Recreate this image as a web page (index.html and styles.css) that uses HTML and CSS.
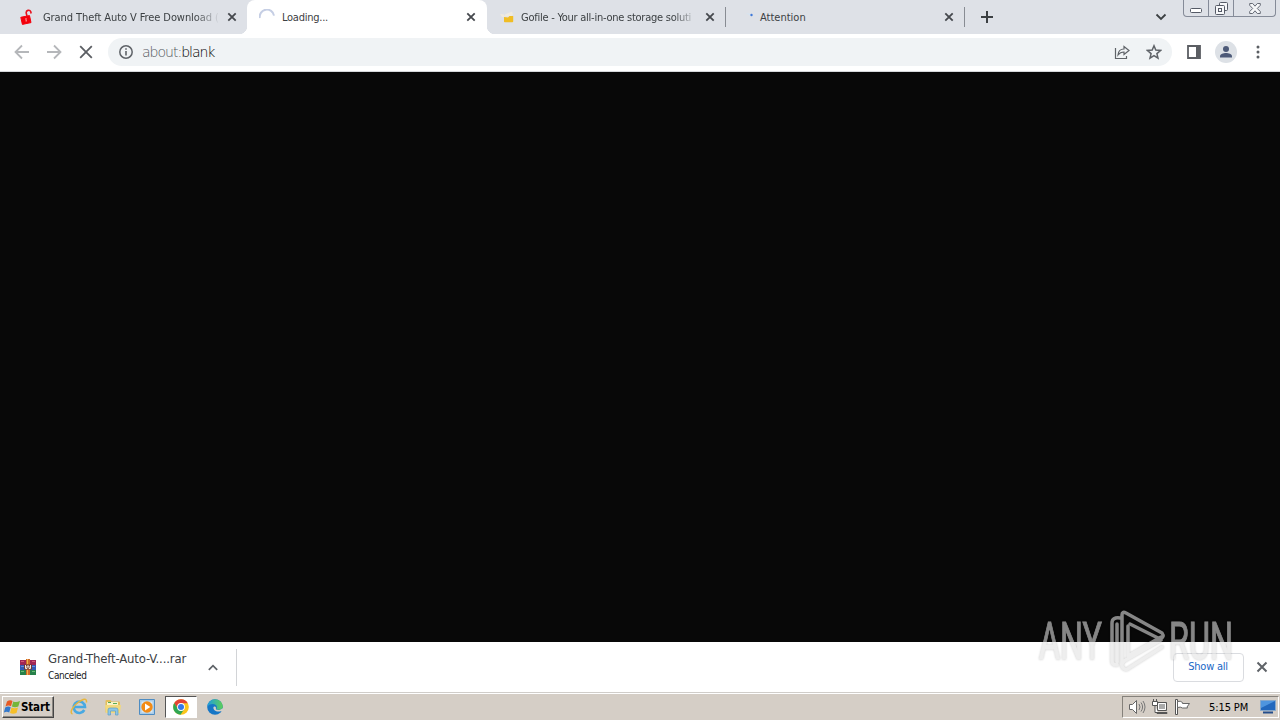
FILE: index.html
```html
<!DOCTYPE html>
<html lang="en">
<head>
  <meta charset="UTF-8">
  <meta name="viewport" content="width=device-width, initial-scale=1.0">
  <title>about:blank</title>
  <link rel="stylesheet" href="styles.css">
</head>
<body>
  <!-- Tabs -->
  <header class="tab-strip">
    <div class="tab first">
      <svg class="favicon" width="16" height="16" viewBox="0 0 16 16">
        <path d="M8 7L7.200 4a2.400 2.400 0 0 1 4.600-1.200l.3 1.700" fill="none" stroke="#e8101c" stroke-width="1.600"/>
        <path d="M1.800 8.300 10.500 6.600l1.500 7-8.600 1.800z" fill="#f3000c" stroke="#f3000c" stroke-linejoin="round"/>
        <path d="M6.200 9.500l1.500-.3-.3 1.600.6 1.500-1.400.3.100-1.600z" fill="#ffb9b9"/>
      </svg>
      <span class="tab-title fade">Grand Theft Auto V Free Download (</span>
      <svg class="tab-close" width="10" height="10" viewBox="0 0 10 10"><path d="M1.300 1.300l7.400 7.400M8.700 1.300L1.300 8.700"/></svg>
    </div>
    <div class="tab active">
      <svg class="favicon" width="16" height="16" viewBox="0 0 16 16"><path d="M.8 9A7.2 7.2 0 0 1 15 6.6" fill="none" stroke="#c5cee4" stroke-width="2"/></svg>
      <span class="tab-title">Loading...</span>
      <svg class="tab-close" width="10" height="10" viewBox="0 0 10 10"><path d="M1.300 1.300l7.400 7.400M8.700 1.300L1.300 8.700"/></svg>
    </div>
    <div class="tab">
      <svg class="favicon" width="16" height="16" viewBox="0 0 16 16">
        <path d="M1 5l4 .5 1 2.500H3zM6 5.500l7-3 1 3-2 2H6z" fill="#efeae0"/>
        <path d="M5 8l4 .5 1.500-1.500h3.700v5.400q0 .8-.8.8H5.800q-.8 0-.8-.8z" fill="#f0bd24"/>
      </svg>
      <span class="tab-title fade">Gofile - Your all-in-one storage soluti</span>
      <svg class="tab-close" width="10" height="10" viewBox="0 0 10 10"><path d="M1.300 1.300l7.400 7.400M8.700 1.300L1.300 8.700"/></svg>
    </div>
    <div class="tab last">
      <svg class="favicon" width="16" height="16" viewBox="0 0 16 16"><path d="M8 4l5 1v2z" fill="#d3e4f3"/><circle cx="13.500" cy="6" r="1.200" fill="#3f78d8"/></svg>
      <span class="tab-title">Attention</span>
      <svg class="tab-close" width="10" height="10" viewBox="0 0 10 10"><path d="M1.300 1.300l7.400 7.400M8.700 1.300L1.300 8.700"/></svg>
    </div>
    <svg class="new-tab" width="12" height="12" viewBox="0 0 12 12"><path d="M6 0v12M0 6h12" stroke="#3c4043" stroke-width="2"/></svg>
    <svg class="tab-search" width="12" height="8" viewBox="0 0 12 8"><path d="M1.500 1.500L6 6l4.500-4.500" fill="none" stroke="#3c4043" stroke-width="1.800"/></svg>
    <div class="window-buttons">
      <div class="win-btn min"><svg width="12" height="5" viewBox="0 0 12 5"><rect x=".5" y=".5" width="11" height="4" rx="1" fill="#fff" stroke="#555a66"/></svg></div>
      <div class="win-btn max"><svg width="13" height="13" viewBox="0 0 13 13" fill="#f6f7f9" stroke="#555a66"><rect x="4.500" y=".5" width="8" height="8" rx="1"/><rect x=".5" y="3.500" width="9" height="9" rx="1"/><rect x="3.500" y="6.500" width="3" height="3"/></svg></div>
      <div class="win-btn close"><svg width="12" height="11" viewBox="0 0 12 11"><path d="M.7.5h3L6 3.200 8.300.5h3v1.800L8.300 5.500l3 3v2h-3L6 7.800 3.700 10.500h-3v-2l3-3-3-3.200z" fill="#f6f7f9" stroke="#666b76"/></svg></div>
    </div>
  </header>

  <!-- Address bar -->
  <nav class="toolbar">
    <svg class="nav-icon" width="16" height="16" viewBox="0 0 16 16"><path d="M15 8H2M8 1.500L1.500 8 8 14.500" fill="none" stroke="#b5b7ba" stroke-width="1.800"/></svg>
    <svg class="nav-icon" width="16" height="16" viewBox="0 0 16 16"><path d="M1 8h13M8 1.500L14.500 8 8 14.500" fill="none" stroke="#b5b7ba" stroke-width="1.800"/></svg>
    <svg class="nav-icon" width="16" height="16" viewBox="0 0 16 16"><path d="M2.200 2.200l11.600 11.600M13.800 2.200L2.200 13.800" stroke="#5b5e63" stroke-width="1.800"/></svg>
    <div class="omnibox">
      <svg width="14" height="14" viewBox="0 0 14 14"><circle cx="7" cy="7" r="6.200" fill="none" stroke="#5f6368" stroke-width="1.500"/><path d="M7 6v4.500M7 3.300v1.500" stroke="#5f6368" stroke-width="1.600"/></svg>
      <span class="url"><span class="scheme">about:</span>blank</span>
      <svg class="share" width="16" height="16" viewBox="0 0 16 16" fill="none" stroke="#5f6368" stroke-width="1.200"><path d="M1.500 4v10.500h11V12"/><path d="M4 11c.3-4 2.500-6 6-6V2.500L15 6.500l-5 4V8C7.500 8 5.500 9 4 11z"/></svg>
      <svg width="16" height="16" viewBox="0 0 16 16"><path d="M8 1.800l1.800 4.300 4.700.4-3.600 3.100 1.100 4.600-4-2.500-4 2.500 1.100-4.600-3.600-3.100 4.700-.4z" fill="none" stroke="#5f6368" stroke-width="1.500"/></svg>
    </div>
    <svg class="side-panel" width="14" height="14" viewBox="0 0 14 14"><path d="M1 1h12v12H1z" fill="none" stroke="#5b5e63" stroke-width="1.800"/><path d="M9 1h4v12H9z" fill="#5b5e63"/></svg>
    <svg class="avatar" width="22" height="22" viewBox="0 0 22 22"><circle cx="11" cy="11" r="11" fill="#dde1e6"/><circle cx="11" cy="8" r="3" fill="#4d5a78"/><path d="M5 16.500v-1.300c0-2 3.500-3.200 6-3.200s6 1.200 6 3.200v1.300z" fill="#4d5a78"/></svg>
    <svg class="menu" width="4" height="14" viewBox="0 0 4 14" fill="#5b5e63"><circle cx="2" cy="2" r="1.500"/><circle cx="2" cy="7" r="1.500"/><circle cx="2" cy="12" r="1.500"/></svg>
  </nav>

  <main class="page"></main>

  <!-- Downloads -->
  <section class="downloads">
    <svg width="16" height="16" viewBox="0 0 16 16">
      <path d="M0 1h16v5H0z" fill="#a02656"/><path d="M0 6h16v5H0z" fill="#3459b4"/><path d="M0 11h16v5H0z" fill="#27804a"/>
      <path d="M1 2.500h3M12 2.500h3" stroke="#d45878"/><path d="M1 7.500h3M12 7.500h3" stroke="#678be0"/><path d="M1 12.500h3M12 12.500h3" stroke="#68ba74"/>
      <path d="M6 0h4v16H6z" fill="#d06a2b"/><path d="M4 5.500h8v5H4z" fill="#6c3932"/><path d="M5.500 6v3.500h1.500V7h2v2.500h1.500V6" fill="none" stroke="#f6e9df"/><path d="M7.500 0v5M7.500 11v5" stroke="#f0b34f"/>
    </svg>
    <div class="file">
      <div class="file-name">Grand-Theft-Auto-V....rar</div>
      <div class="file-status">Canceled</div>
    </div>
    <svg class="chevron" width="10" height="7" viewBox="0 0 10 7"><path d="M.8 5.800L5 1.600l4.200 4.200" fill="none" stroke="#5f6368" stroke-width="1.700"/></svg>
    <div class="divider"></div>
    <button class="show-all"><span>Show all</span></button>
    <svg class="shelf-close" width="12" height="12" viewBox="0 0 12 12"><path d="M1.500 1.500l9 9M10.500 1.500l-9 9" stroke="#5f6368" stroke-width="2"/></svg>
  </section>

  <!-- Taskbar -->
  <footer class="taskbar">
    <div class="start">
      <svg width="17" height="16" viewBox="0 0 17 16">
        <path d="M3 2.500Q6 .5 8.500 2L7 7.200Q4.500 5.800 1.500 7.500z" fill="#e75a24"/>
        <path d="M9.300 2.400Q12 4 16 2L14.300 7.500Q11 9 7.900 7.500z" fill="#75b63a"/>
        <path d="M1.200 8.500Q4 6.800 6.700 8.200L5.200 13.500Q2.500 12-.2 13.700z" fill="#3479cc"/>
        <path d="M7.500 8.500Q10.500 10 14 8.500L12.500 14Q9 15.500 6 14z" fill="#f6bf29"/>
      </svg>
      <span>Start</span>
    </div>
    <div class="task ie">
      <svg width="18" height="18" viewBox="0 0 18 18"><path d="M14.300 12A5.700 5.700 0 1 1 15 9H5" fill="none" stroke="#48a9e2" stroke-width="2.600"/><path d="M2.500 16C-1 15 3 8 8 4.500S17-.5 16.500 4.500" fill="none" stroke="#e7b63d" stroke-width="1.500"/></svg>
    </div>
    <div class="task">
      <svg width="18" height="18" viewBox="0 0 18 18"><path d="M1.500 3q0-1 1-1h4l1 1.500h7.500q1 0 1 1v10h-14.500z" fill="#e3bf5c"/><path d="M3 4h11v6H3z" fill="#f9f2c6"/><path d="M4 4.500h3M9 5.500h4" stroke="#58a957"/><path d="M1 7h16l-1 8H2z" fill="#f2d97e"/><path d="M4 17v-5q0-2 2-2h6q2 0 2 2v5h-2.500v-4h-5v4z" fill="#8dc6e5" stroke="#5c9dc5" stroke-width=".7"/></svg>
    </div>
    <div class="task">
      <svg width="16" height="16" viewBox="0 0 16 16"><path d="M.5.5h15v15H.5z" fill="#a9cce8" stroke="#4e8cc2"/><path d="M2.500 2.500h11v11h-11z" fill="#d9e9f4"/><circle cx="8" cy="8" r="5.700" fill="#f28b16"/><path d="M6 4.500L11.300 8 6 11.500z" fill="#fff"/></svg>
    </div>
    <div class="task running">
      <svg width="16" height="16" viewBox="0 0 16 16"><circle cx="8" cy="8" r="7.800" fill="#fbc51b"/><path d="M1.200 4.100A7.800 7.800 0 0 1 14.800 4.200H8L5 10z" fill="#e44335"/><path d="M1.200 4.100A7.800 7.800 0 0 0 7.500 15.800L11.300 10 5 10z" fill="#30a653"/><circle cx="8" cy="8" r="3.900" fill="#fff"/><circle cx="8" cy="8" r="3" fill="#3579e8"/></svg>
    </div>
    <div class="task">
      <svg width="16" height="16" viewBox="0 0 16 16">
        <defs><linearGradient id="edge" x1="0" x2="1"><stop offset="0" stop-color="#1f9ddf"/><stop offset="1" stop-color="#5dcf56"/></linearGradient></defs>
        <circle cx="8" cy="8" r="7.800" fill="#1676c6"/><path d="M.3 7.500A7.800 7.800 0 0 1 15.800 7c.2 3-2.300 4.200-5 3.700-2-.4-1.200-1-.9-2.300C10.300 4.500 3.500 3.500.3 7.500z" fill="url(#edge)"/><path d="M6.500 8c-.8 3.500 3.500 5.500 8 4l1.500.3v-3l-3 1.500c-3 .7-4.700-.2-4-2-.3-1.500-2-1.800-2.500-.8z" fill="#d5d0c8"/>
      </svg>
    </div>
    <div class="tray">
      <svg width="18" height="16" viewBox="0 0 18 16"><path d="M1.500 5.500h3l4-4v13l-4-4h-3z" fill="#fff" stroke="#666"/><path d="M11 5q2 3 0 6M13 3.500q3.200 4.500 0 9M15 2q4 6 0 12" fill="none" stroke="#777"/></svg>
      <svg width="16" height="16" viewBox="0 0 16 16"><path d="M5.500 3.500h9v8h-9z" fill="#aaa" stroke="#555"/><path d="M6.500 4.500h7v6h-7z" fill="none" stroke="#fff"/><path d="M5 13.500h10v1H5z" fill="#fff" stroke="#555"/><path d="M.5 2.500h5v4h-5zM1.500 0v2M4.500 0v2M3 6.500v7h3" fill="#fff" stroke="#555"/></svg>
      <svg width="17" height="16" viewBox="0 0 17 16"><path d="M1.500.5h2v15h-2z" fill="#fff" stroke="#555"/><path d="M3.500 2.500q3-1 5 1v1h7l-2.500 3.500 .5 1H8.500q-2-1.500-5-.5z" fill="#fff" stroke="#666"/></svg>
      <span class="clock">5:15 PM</span>
      <svg class="desktop-icon" width="16" height="14" viewBox="0 0 16 14"><path d="M.5.500h15v10H.5z" fill="#2368bd" stroke="#87a8cb"/><path d="M1 1h14L1 8z" fill="#4f95de"/><path d="M3 12.500h10" stroke="#234d8b" stroke-width="2"/></svg>
    </div>
  </footer>

  <svg class="watermark" width="204" height="76" viewBox="0 0 204 76">
    <g class="mark-text">
      <text x="5" y="57" textLength="63" lengthAdjust="spacingAndGlyphs">ANY</text>
      <text x="135" y="57" textLength="64" lengthAdjust="spacingAndGlyphs">RUN</text>
    </g>
    <g class="mark-logo">
      <path d="M86 16q-8-1-8 5v38q0 4 5 4M83 60V22"/>
      <path d="M88 62V13q0-4 4-2l36 20q3 4-2 6L96 22"/>
      <path d="M94 24v30L127 35M127 38L90 59q-4 3-1 7 3 3 6 0l33-21"/>
    </g>
  </svg>
</body>
</html>
```

FILE: styles.css
```css
* {
  margin: 0;
  padding: 0;
  box-sizing: border-box;
}

body {
  width: 1280px;
  height: 720px;
  overflow: hidden;
  display: flex;
  flex-direction: column;
  position: relative;
  background: #fff;
  color: #3c4043;
  font-family: "DejaVu Sans Condensed", "DejaVu Sans", sans-serif;
  font-size: 11px;
}

svg {
  display: block;
  flex-shrink: 0;
}

/* Tabs */
.tab-strip {
  display: flex;
  height: 34px;
  flex-shrink: 0;
  align-items: center;
  background: #dee1e7;
}

.tab {
  display: flex;
  align-items: center;
  width: 239px;
  height: 34px;
  padding: 0 11px 0 12px;
  position: relative;
}

.tab.first {
  width: 247px;
  padding-left: 19px;
  padding-right: 10px;
}

.tab.active {
  width: 240px;
  background: #fff;
  border-radius: 8px 8px 0 0;
}

.tab.active::before,
.tab.active::after {
  content: "";
  position: absolute;
  bottom: 0;
  width: 8px;
  height: 8px;
}

.tab.active::before {
  left: -8px;
  background: radial-gradient(circle at 0 0, #dee1e7 8px, #fff 8.5px);
}

.tab.active::after {
  right: -8px;
  background: radial-gradient(circle at 100% 0, #dee1e7 8px, #fff 8.5px);
}

.tab:nth-child(3)::after,
.tab.last::after {
  content: "";
  position: absolute;
  right: 0;
  top: 7px;
  width: 1px;
  height: 20px;
  background: #888c93;
}

.tab-title {
  flex: 1;
  margin: 0 7px 0 6px;
  white-space: nowrap;
  letter-spacing: -0.25px;
}

.active .tab-title {
  margin-left: 7px;
}

.first .tab-title {
  margin-left: 8px;
  letter-spacing: -0.08px;
}

.last .tab-title {
  letter-spacing: 0;
}

.fade {
  -webkit-mask-image: linear-gradient(90deg, #000 86%, transparent);
  mask-image: linear-gradient(90deg, #000 86%, transparent);
}

.tab-close {
  stroke: #45484d;
  stroke-width: 1.8;
}

.new-tab {
  margin-left: 16px;
}

.tab-search {
  margin-left: auto;
  margin-right: 16px;
}

.window-buttons {
  display: flex;
  align-self: flex-start;
  width: 93px;
  height: 17px;
  margin-right: 4px;
  border: 1px solid #858b98;
  border-top: 0;
  border-radius: 0 0 4px 4px;
}

.win-btn {
  width: 25px;
  display: flex;
  justify-content: center;
  align-items: center;
  border-right: 1px solid #858b98;
}

.win-btn.min {
  padding-top: 4px;
}

.win-btn.close {
  width: 41px;
  border-right: 0;
}

/* Address bar */
.toolbar {
  display: flex;
  align-items: center;
  height: 38px;
  flex-shrink: 0;
  padding: 0 0 1px 14px;
  border-bottom: 1px solid #d5d7da;
}

.nav-icon {
  margin-right: 16px;
}

.omnibox {
  display: flex;
  align-items: center;
  width: 1064px;
  height: 28px;
  margin-left: -2px;
  padding: 0 10px 0 11px;
  background: #f0f3f5;
  border-radius: 14px;
}

.url {
  flex: 1;
  margin-left: 9px;
  font-family: "DejaVu Sans", sans-serif;
  font-weight: 200;
  font-size: 14px;
  letter-spacing: -1px;
  color: #000;
}

.scheme {
  color: #55595e;
}

.share {
  margin-right: 16px;
}

.side-panel {
  margin-left: 15px;
}

.avatar {
  margin-left: 14px;
}

.menu {
  margin-left: 19px;
}

.page {
  flex: 1;
  background: #080808;
}

/* Downloads */
.downloads {
  display: flex;
  align-items: center;
  height: 50px;
  flex-shrink: 0;
  padding: 0 12px 0 20px;
  background: #fff;
}

.file {
  width: 147px;
  margin-left: 12px;
}

.file-name {
  height: 18px;
  font-size: 13px;
  line-height: 15px;
  letter-spacing: -0.15px;
  white-space: nowrap;
}

.file-status {
  font-size: 10px;
  line-height: 14px;
  letter-spacing: -0.4px;
  color: #202124;
}

.chevron {
  margin-left: 13px;
}

.divider {
  width: 1px;
  height: 37px;
  margin-left: 18px;
  background: #d2d4d7;
}

.show-all {
  width: 71px;
  height: 29px;
  margin-left: auto;
  padding-bottom: 2px;
  padding-right: 1px;
  border: 1px solid #dadce0;
  border-radius: 4px;
  background: #fff;
  color: #1967c6;
  font: inherit;
  letter-spacing: -0.25px;
}

.shelf-close {
  margin-left: 12px;
}

/* Taskbar */
.taskbar {
  display: flex;
  align-items: center;
  height: 28px;
  flex-shrink: 0;
  padding: 1px 0 0 2px;
  background: #d5cec6;
  border-top: 1px solid #d0cdc9;
  box-shadow: inset 0 1px #fff;
}

.start {
  display: flex;
  align-items: center;
  width: 52px;
  height: 22px;
  padding-left: 1px;
  border: 1px solid;
  border-color: #fff #454545 #454545 #fff;
  box-shadow: inset -1px -1px #8b8781;
  color: #000;
  font-weight: bold;
  font-size: 11.5px;
  letter-spacing: -0.15px;
}

.task {
  display: flex;
  justify-content: center;
  align-items: center;
  width: 34px;
  height: 22px;
}

.task.ie {
  margin-left: 8px;
}

.task.running {
  width: 32px;
  margin: 0 1px;
  background: #fff;
  border: 1px solid;
  border-color: #555 #fff #fff #555;
}

.tray {
  display: flex;
  align-items: center;
  width: 157px;
  height: 22px;
  margin-left: auto;
  margin-right: 1px;
  padding: 0 2px 0 5px;
  gap: 6px;
  border: 1px solid;
  border-color: #85817b #fff #fff #85817b;
  color: #000;
}

.clock {
  margin-left: 12px;
  white-space: nowrap;
  letter-spacing: -0.1px;
}

.desktop-icon {
  margin-left: auto;
}

/* Overlay logo */
.watermark {
  position: absolute;
  left: 1034px;
  top: 602px;
  filter: drop-shadow(0 0 1px rgba(0, 0, 0, 0.35));
  opacity: 0.58;
}

.mark-text {
  font-family: Roboto, sans-serif;
  font-size: 51px;
  fill: #e2e2e2;
  stroke: #e2e2e2;
  stroke-width: 1;
}

.mark-logo {
  fill: none;
  stroke: #e2e2e2;
  stroke-width: 3.5;
  stroke-linecap: round;
  stroke-linejoin: round;
}
```
